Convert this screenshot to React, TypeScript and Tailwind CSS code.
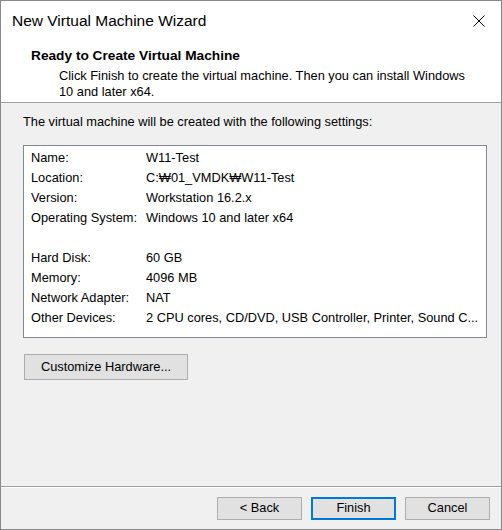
import React from "react";

const rows: [string, string][] = [
  ["Name:", "W11-Test"],
  ["Location:", "C:\u20A901_VMDK\u20A9W11-Test"],
  ["Version:", "Workstation 16.2.x"],
  ["Operating System:", "Windows 10 and later x64"],
  ["", ""],
  ["Hard Disk:", "60 GB"],
  ["Memory:", "4096 MB"],
  ["Network Adapter:", "NAT"],
  ["Other Devices:", "2 CPU cores, CD/DVD, USB Controller, Printer, Sound C..."],
];

function WinButton({ label, primary }: { label: string; primary?: boolean }) {
  return (
    <button
      className={
        "w-[85px] h-[23px] bg-[#e1e1e1] text-[12.8px] leading-none text-black flex items-center justify-center " +
        (primary ? "border-2 border-[#0078d7]" : "border border-[#adadad]")
      }
    >
      {label}
    </button>
  );
}

export default function App() {
  return (
    <div
      className="w-[502px] h-[530px] border border-[#888888] flex flex-col bg-[#f0f0f0] text-black text-[12.8px]"
      style={{ fontFamily: '"Liberation Sans", Arial, "Noto Sans CJK KR", sans-serif' }}
    >
      <div className="h-[39px] bg-white flex items-center justify-between pl-[11px] pr-[16px]">
        <span className="text-[15.5px] leading-[20px]">New Virtual Machine Wizard</span>
        <svg width="12" height="12" viewBox="0 0 12 12" className="mt-px">
          <path d="M0.5 0.5 L11.5 11.5 M11.5 0.5 L0.5 11.5" stroke="#000" strokeWidth="1" fill="none" />
        </svg>
      </div>

      <div className="bg-white pl-[30px] pt-[8px] pb-[2px] border-b border-[#a0a0a0]">
        <div className="font-bold leading-[16px] text-[13.7px]">Ready to Create Virtual Machine</div>
        <div className="pl-[28px] mt-[4px] leading-[16px] pr-[10px]">
          Click Finish to create the virtual machine. Then you can install Windows
          <br />
          10 and later x64.
        </div>
      </div>

      <div className="flex-1 pl-[22px] pt-[11px]">
        <div className="leading-[16px]">The virtual machine will be created with the following settings:</div>
        <div className="mt-[15px] w-[464px] bg-white border border-[#828790] pl-[7px] pt-[2px] pb-[9px]">
          {rows.map(([label, value], i) => (
            <div key={i} className="flex h-[20px] leading-[20px] whitespace-nowrap overflow-hidden">
              <span className="w-[115px] shrink-0">{label}</span>
              <span>{value}</span>
            </div>
          ))}
        </div>
        <button className="mt-[16px] ml-px w-[164px] h-[26px] bg-[#e1e1e1] border border-[#adadad] text-[12.8px] flex items-center justify-center">
          Customize Hardware...
        </button>
      </div>

      <div className="border-t border-[#a0a0a0]">
        <div className="h-px bg-white" />
        <div className="h-[41px] flex items-center justify-end gap-[9px] pr-[11px]">
          <WinButton label="< Back" />
          <WinButton label="Finish" primary />
          <WinButton label="Cancel" />
        </div>
      </div>
    </div>
  );
}
